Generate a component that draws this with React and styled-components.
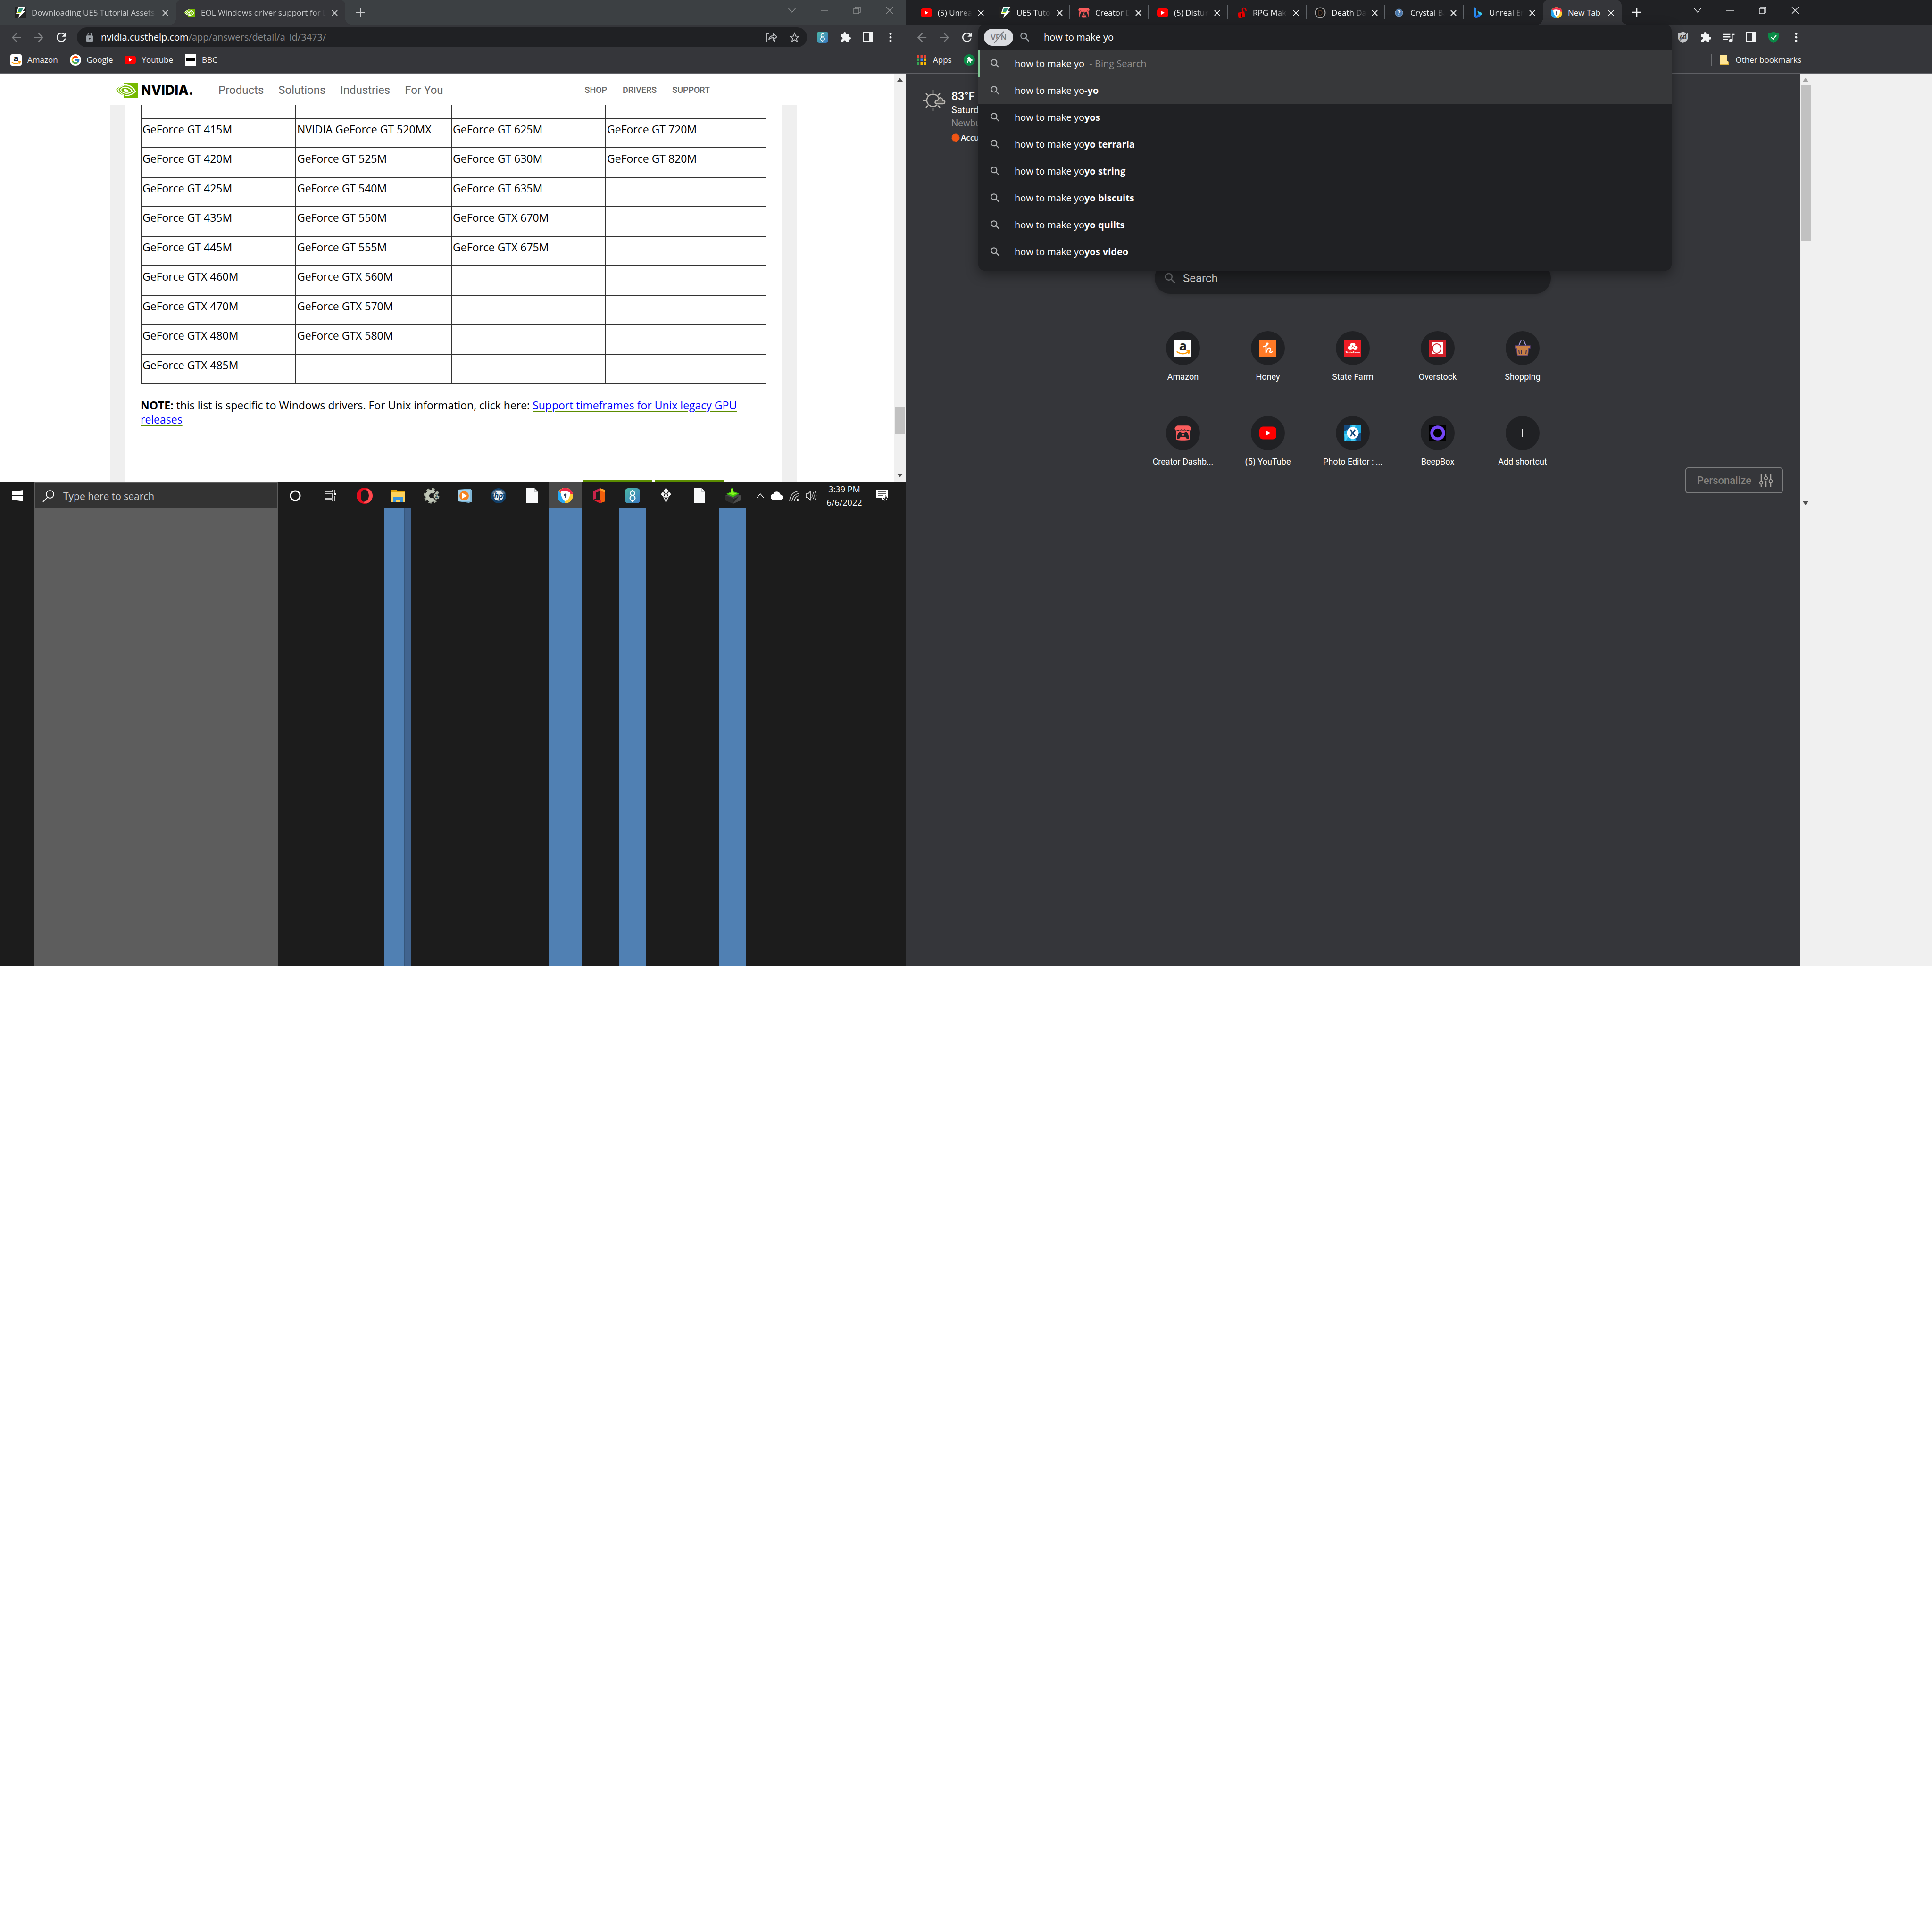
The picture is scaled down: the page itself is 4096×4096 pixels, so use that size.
import React from "react";
import styled, { createGlobalStyle, css } from "styled-components";
import { FcGoogle } from "react-icons/fc";
import { FaItchIo } from "react-icons/fa";
import {
  MdExtension,
  MdQueueMusic,
  MdLock,
  MdSearch,
  MdRefresh,
  MdStarBorder,
  MdArrowBack,
  MdArrowForward,
  MdMoreVert,
  MdCloud,
} from "react-icons/md";

const ui = `"Open Sans", "Noto Sans", sans-serif`;
const roboto = `Roboto, "Liberation Sans", sans-serif`;

const Global = createGlobalStyle`
  * { box-sizing: border-box; }
  body { margin: 0; background: #fff; font-family: ${ui}; }
  button { border: 0; padding: 0; background: none; font: inherit; color: inherit; }
  a { color: inherit; text-decoration: none; }
  input { border: 0; padding: 0; outline: 0; background: none; font: inherit; color: inherit; }
  svg { display: block; flex: none; }
`;

/* ---------- shell ---------- */

const Desktop = styled.main`
  display: grid;
  grid-template-columns: 15fr 17fr;
  min-height: 50vh;
`;

const Monitor = styled.section`
  display: flex;
  flex-direction: column;
  min-width: 0;
`;

const RightMonitor = styled(Monitor)`
  background: #35363a;
`;

const TabStrip = styled.header`
  display: flex;
  height: 52px;
  padding-left: ${(p) => (p.$dim ? 14 : 15)}px;
  padding-right: ${(p) => p.$bleed || 0}px;
  background: ${(p) => (p.$dim ? "#3c4043" : "#202124")};
  color: ${(p) => (p.$dim ? "#c9cbcd" : "#f1f3f4")};
`;

const TabBox = styled.div`
  position: relative;
  display: flex;
  align-items: center;
  gap: 12px;
  flex: 0 1 ${(p) => p.$width}px;
  min-width: 0;
  padding: 2px 16px 0 17px;
  ${(p) =>
    p.$active &&
    css`
      background: #35363a;
      border-radius: 12px 12px 0 0;
      &::before,
      &::after {
        content: "";
        position: absolute;
        bottom: 0;
        width: 12px;
        height: 12px;
      }
      &::before {
        right: 100%;
        background: radial-gradient(circle at 0 0, transparent 12px, #35363a 12px);
      }
      &::after {
        left: 100%;
        background: radial-gradient(circle at 100% 0, transparent 12px, #35363a 12px);
      }
    `}
  ${(p) =>
    p.$divided &&
    css`
      background: linear-gradient(#5f6368, #5f6368) right center / 2px 30px no-repeat;
    `}
`;

const TabTitle = styled.span`
  flex: 1;
  min-width: 0;
  overflow: hidden;
  white-space: nowrap;
  font-size: 17px;
  line-height: 24px;
  mask-image: ${(p) => (p.$whole ? "none" : "linear-gradient(to left, transparent, #000 28px)")};
`;

const TabClose = styled.button`
  display: flex;
`;

const NewTabButton = styled.button`
  display: flex;
  align-items: center;
  justify-content: center;
  width: 40px;
  margin-left: 12px;
`;

const WindowButtons = styled.div`
  display: flex;
  height: 44px;
  margin-left: auto;
  color: ${(p) => (p.$dim ? "#8f9193" : "#e8eaed")};
`;

const WindowButton = styled.button`
  display: flex;
  align-items: center;
  justify-content: center;
  width: 69px;
`;

const Toolbar = styled.div`
  display: flex;
  align-items: center;
  height: 54px;
  padding: 0 ${(p) => p.$right}px 0 10px;
  background: #35363a;
  color: #e8eaed;
`;

const ToolButton = styled.button`
  display: flex;
  align-items: center;
  justify-content: center;
  width: 48px;
  height: 42px;
  flex: none;
  color: ${(p) => p.$color || "#f1f3f4"};
`;

const AddressBar = styled.div`
  display: flex;
  align-items: center;
  flex: 1;
  min-width: 0;
  height: 42px;
  margin: 0 9px;
  padding: 0 3px 0 16px;
  border-radius: 21px;
  background: #202124;
  color: #9aa0a6;
`;

const Address = styled.div`
  flex: 1;
  margin-left: 13px;
  font-size: 20px;
  line-height: 28px;
  color: #86888a;
  b {
    font-weight: 400;
    color: #fff;
  }
`;

const Bookmarks = styled.nav`
  display: flex;
  align-items: center;
  gap: 25px;
  height: 50px;
  padding: 0 ${(p) => p.$right || 22}px 6px 22px;
  border-bottom: 2px solid #5f6065;
  background: #35363a;
  color: #f1f3f4;
`;

const BookmarkLink = styled.a`
  display: flex;
  align-items: center;
  gap: 12px;
  font-size: 17px;
  line-height: 24px;
`;

const OtherBookmarks = styled.div`
  display: flex;
  align-items: center;
  height: 24px;
  margin-left: auto;
  padding-left: 14px;
  border-left: 1px solid #6b6d70;
`;

/* ---------- support page ---------- */

const Viewport = styled.div`
  display: flex;
`;

const SupportPage = styled.div`
  flex: 1;
  min-width: 0;
  background: #fff;
`;

const SiteHeader = styled.header`
  display: flex;
  align-items: center;
  height: 66px;
  padding: 4px 391px 0 246px;
  color: #666;
  font-family: ${roboto};
`;

const Brand = styled.a`
  display: flex;
  align-items: center;
  gap: 7px;
  width: 166px;
  margin-right: 51px;
  color: #000;
  font: 800 28px/32px Inter, sans-serif;
`;

const MainLinks = styled.nav`
  display: flex;
  gap: 31px;
  font-size: 24px;
  line-height: 30px;
`;

const SideLinks = styled.nav`
  display: flex;
  gap: 33px;
  margin-left: auto;
  font-size: 18px;
  line-height: 24px;
  font-weight: 500;
`;

const Gutter = styled.div`
  padding: 0 207px 0 234px;
`;

const Article = styled.article`
  padding: 0 33px;
  border: solid #efefef;
  border-width: 0 31px;
  font-size: 23px;
  line-height: 30px;
  color: #000;
`;

const GpuTable = styled.table`
  width: 100%;
  table-layout: fixed;
  border-collapse: separate;
  border-spacing: 0;
  border-left: 2px solid #333;
`;

const GpuRow = styled.tr`
  height: ${(p) => p.$height}px;
`;

const GpuCell = styled.td`
  padding: ${(p) => (p.$cut ? 0 : 7)}px 2px 0;
  vertical-align: top;
  border: solid #333;
  border-width: 0 2px 2px 0;
`;

const Rule = styled.hr`
  height: 1px;
  margin: 15px 0 14px;
  border: 0;
  background: #999;
`;

const Note = styled.p`
  margin: 0;
  a {
    color: #00f;
    text-decoration: underline 2px #5b8c00;
    text-underline-offset: 3px;
  }
`;

const ActionTops = styled.div`
  display: flex;
  justify-content: flex-end;
  gap: 6px;
  margin-top: 114px;
  padding-right: 89px;
`;

const ActionTop = styled.div`
  width: 147px;
  height: 3px;
  background: #5b8c00;
`;

const Scrollbar = styled.div`
  display: flex;
  flex-direction: column;
  align-items: flex-start;
  width: ${(p) => p.$width}px;
  height: ${(p) => p.$height};
  padding: 9px 2px;
  background: #f0f0f0;
  color: ${(p) => p.$arrow};
`;

const Thumb = styled.div`
  width: 21px;
  height: ${(p) => p.$height}px;
  margin-top: ${(p) => p.$top}px;
  margin-bottom: auto;
  background: #c1c1c1;
`;

const Arrow = styled.div`
  width: 0;
  margin-left: 4px;
  border: 6px solid transparent;
  border-width: ${(p) => (p.$down ? "8px 6px 0" : "0 6px 8px")};
  border-top-color: ${(p) => (p.$down ? "#505050" : "transparent")};
  border-bottom-color: ${(p) => (p.$down ? "transparent" : "currentColor")};
`;

/* ---------- taskbar ---------- */

const Taskbar = styled.footer`
  display: flex;
  flex: 1;
  align-items: stretch;
  padding-right: 5px;
  background: #1c1c1c;
  color: #fff;
`;

const StartButton = styled.button`
  display: flex;
  align-items: flex-start;
  justify-content: center;
  flex: none;
  width: 73px;
  padding-top: 18px;
`;

const SearchPane = styled.div`
  flex: none;
  width: 516px;
  background: #5d5d5d;
`;

const TaskSearch = styled.label`
  display: flex;
  align-items: center;
  gap: 18px;
  height: 58px;
  padding: 3px 15px 0;
  border: 2px solid #5d5d5d;
  background: #333;
  color: #fff;
  input {
    flex: 1;
    min-width: 0;
    font-size: 21px;
    line-height: 30px;
  }
  input::placeholder {
    color: #d0d0d0;
    opacity: 1;
  }
`;

const TaskApp = styled.button`
  display: flex;
  flex: none;
  flex-direction: column;
  align-items: center;
  width: ${(p) => (p.$system ? 74 : 71)}px;
`;

const TaskIcon = styled.span`
  display: flex;
  align-items: center;
  justify-content: center;
  width: 69px;
  height: 57px;
  padding-top: 2px;
  background: ${(p) => (p.$active ? "#484848" : "transparent")};
`;

const Streak = styled.span`
  flex: 1;
  width: ${(p) => (p.$wide ? 69 : 57)}px;
  background: ${(p) =>
    p.$stacked
      ? "linear-gradient(to right, #5080b3 42px, #35577d 42px, #35577d 44px, #41648f 44px)"
      : "#5080b3"};
`;

const Tray = styled.div`
  display: flex;
  align-items: center;
  gap: 13px;
  height: 57px;
  padding-top: 2px;
  margin-left: auto;
  padding-right: 31px;
`;

const Clock = styled.time`
  margin: 0 17px 0 7px;
  width: 76px;
  text-align: center;
  font-size: 18px;
  line-height: 28px;
`;

const ShowDesktop = styled.div`
  width: 1px;
  background: #8a8a8a;
`;

/* ---------- new tab window ---------- */

const OmniSlot = styled.div`
  position: relative;
  z-index: 2;
  align-self: flex-start;
  flex: 1;
  min-width: 0;
  height: 54px;
`;

const OmniPopup = styled.div`
  position: absolute;
  inset: 0 0 auto 0;
  padding-bottom: 12px;
  border-radius: 14px;
  background: #202124;
  color: #fff;
  box-shadow: 0 8px 26px rgba(0, 0, 0, 0.4);
`;

const OmniField = styled.div`
  display: flex;
  align-items: center;
  height: 54px;
  padding-left: 12px;
  font-size: 20px;
  line-height: 28px;
  color: #9aa0a6;
  input {
    field-sizing: content;
    margin-left: 27px;
    color: #fff;
  }
`;

const VpnPill = styled.button`
  display: flex;
  align-items: center;
  justify-content: center;
  width: 62px;
  height: 36px;
  margin-right: 12px;
  border-radius: 18px;
  background: #dadce0;
`;

const Caret = styled.span`
  width: 1px;
  height: 28px;
  background: #fff;
`;

const Suggestions = styled.ul`
  margin: 0;
  padding: 0;
  list-style: none;
`;

const Suggestion = styled.li`
  display: flex;
  align-items: center;
  gap: 28px;
  height: 57px;
  padding-left: 19px;
  border-left: 4px solid ${(p) => (p.$selected ? "#81c995" : "transparent")};
  background: ${(p) => (p.$lit ? "#37383a" : "transparent")};
  font-size: 20px;
  line-height: 28px;
  svg {
    color: #b4b6b8;
  }
  i {
    font-style: normal;
    color: #8d8e90;
  }
`;

const NewTabArea = styled.div`
  display: flex;
  flex: 1;
`;

const NewTabPage = styled.div`
  position: relative;
  flex: 1;
  min-width: 0;
  height: 924px;
  padding-top: 33px;
  color: #fff;
  font-family: ${roboto};
`;

const Weather = styled.div`
  display: flex;
  gap: 12px;
  height: 367px;
  padding-left: 37px;
`;

const WeatherText = styled.div`
  display: flex;
  flex-direction: column;
  font-size: 20px;
  line-height: 28px;
  strong {
    font-size: 24px;
    line-height: 30px;
    font-weight: 500;
  }
  em {
    font-style: normal;
    color: #8d8e90;
  }
`;

const Accu = styled.span`
  display: flex;
  align-items: center;
  gap: 2px;
  margin-top: 5px;
  font: 600 17px/24px ${ui};
`;

const PageSearch = styled.label`
  display: flex;
  align-items: center;
  gap: 12px;
  max-width: 840px;
  height: 67px;
  margin: 0 auto 79px;
  padding: 0 18px;
  border-radius: 34px;
  background: #202124;
  box-shadow: 0 2px 8px rgba(0, 0, 0, 0.2);
  color: #6b6d70;
  font-size: 24px;
  input {
    flex: 1;
    min-width: 0;
  }
  input::placeholder {
    color: #d8d8d8;
    opacity: 1;
  }
`;

const Shortcuts = styled.nav`
  display: grid;
  grid-template-columns: repeat(5, 180px);
  grid-auto-rows: 180px;
  justify-content: center;
`;

const Shortcut = styled.a`
  display: flex;
  flex-direction: column;
  align-items: center;
  gap: 13px;
  font-size: 18px;
  line-height: 24px;
`;

const Disc = styled.span`
  display: flex;
  align-items: center;
  justify-content: center;
  width: 72px;
  height: 72px;
  border-radius: 50%;
  background: #202124;
`;

const Personalize = styled.button`
  position: absolute;
  right: 36px;
  bottom: 34px;
  display: flex;
  align-items: center;
  gap: 17px;
  height: 55px;
  padding: 0 20px 0 23px;
  border: 2px solid #7c7d7e;
  border-radius: 6px;
  color: #85827e;
  font-size: 22px;
  font-weight: 500;
`;

const ScrollSide = styled.aside`
  width: 280px;
  background: #f0f0f0;
`;

const GoogleDisc = styled.span`
  display: flex;
  align-items: center;
  justify-content: center;
  width: 24px;
  height: 24px;
  border-radius: 50%;
  background: #fff;
`;

/* ---------- drawings ---------- */

const Svg = ({ s = 24, w, h, box = "0 0 24 24", children }) => (
  <svg width={w || s} height={h || s} viewBox={box} fill="none" aria-hidden="true">
    {children}
  </svg>
);

const GoogleBadge = () => (
  <GoogleDisc>
    <FcGoogle size={20} />
  </GoogleDisc>
);
const CrossIcon = ({ s = 13, t = 2 }) => (
  <Svg s={s} box="0 0 14 14">
    <path d="M1 1L13 13M13 1L1 13" stroke="currentColor" strokeWidth={t} />
  </Svg>
);
const PlusIcon = ({ s = 20, t = 2 }) => (
  <Svg s={s} box="0 0 20 20">
    <path d="M10 1V19M1 10H19" stroke="currentColor" strokeWidth={t} />
  </Svg>
);
const ChevronIcon = ({ up }) => (
  <Svg w={18} h={12} box="0 0 18 12">
    <path d={up ? "M1 11L9 2L17 11" : "M1 1L9 10L17 1"} stroke="currentColor" strokeWidth="1.4" />
  </Svg>
);
const MinusIcon = () => (
  <Svg s={16} box="0 0 16 16">
    <path d="M0 8H16" stroke="currentColor" strokeWidth="1.4" />
  </Svg>
);
const RestoreIcon = () => (
  <Svg s={16} box="0 0 16 16">
    <path d="M1 4H12V15H1ZM4 4V1H15V12H12" stroke="currentColor" strokeWidth="1.4" />
  </Svg>
);
const PanelIcon = () => (
  <Svg s={24}>
    <path fillRule="evenodd" d="M1 1H23V23H1ZM4 4V20H14V4Z" fill="currentColor" />
  </Svg>
);
const ShareIcon = () => (
  <Svg s={24}>
    <path d="M6 5H2V22H19V17" stroke="currentColor" strokeWidth="2" />
    <path d="M6 17C7 11 10 9 15 9V4L23 11L15 18V13C11 13 8 14 6 17Z" stroke="currentColor" strokeWidth="2" />
  </Svg>
);
const EpicBoltIcon = () => (
  <Svg s={24}>
    <rect width="24" height="24" fill="#242424" />
    <path d="M8 0H23L17 9H22L7 24L11 14H3Z" fill="#fff" />
    <path d="M9 3H18L14 10H7Z" fill="#2c8f78" />
    <path d="M4 10H14L12 13H5Z" fill="#c6e313" />
  </Svg>
);
const NvidiaEye = ({ w = 46, h = 31 }) => (
  <Svg w={w} h={h} box="0 0 46 31">
    <path d="M17 0H46V31H17Z" fill="#76b900" />
    <path d="M0 14Q12 2 24 4Q36 7 42 17Q33 28 18 27Q6 24 0 14Z" fill="#76b900" />
    <path d="M17 4Q33 3 41 18Q31 28 18 26" stroke="#fff" strokeWidth="2.4" />
    <path d="M17 5Q7 8 4 14Q8 22 17 25" stroke="#fff" strokeWidth="2" />
    <path d="M17 9Q28 8 34 17Q27 24 17 21Q10 18 10 14Q12 10 17 9" stroke="#fff" strokeWidth="2.2" />
    <path d="M17 13Q23 12 27 17Q22 20 17 17Z" fill="#fff" />
  </Svg>
);
const YoutubeIcon = ({ s = 24 }) => (
  <Svg s={s}>
    <rect y="3" width="24" height="18" rx="5" fill="#f00" />
    <path d="M9 8L16 12L9 16Z" fill="#fff" />
  </Svg>
);
const AmazonIcon = ({ s = 24, r = 4 }) => (
  <Svg s={s}>
    <rect width="24" height="24" rx={r} fill="#fff" />
    <text x="12" y="15" textAnchor="middle" fontFamily="Open Sans" fontWeight="700" fontSize="18" fill="#222">a</text>
    <path d="M3 17Q12 23 20 17M17 16L21 16L20 20" stroke="#f90" strokeWidth="1.8" />
  </Svg>
);
const BbcIcon = () => (
  <Svg s={24}>
    <rect width="24" height="24" fill="#fff" />
    <path d="M2 9H8V15H2ZM9 9H15V15H9ZM16 9H22V15H16Z" fill="#000" />
  </Svg>
);
const EightIcon = ({ s = 24 }) => (
  <Svg s={s}>
    <defs>
      <linearGradient id={`eight${s}`} x1="0" y1="0" x2="1" y2="1">
        <stop offset="0" stopColor="#4bb8a5" />
        <stop offset="1" stopColor="#3a78c2" />
      </linearGradient>
    </defs>
    <rect width="24" height="24" rx="5" fill={`url(#eight${s})`} />
    <circle cx="12" cy="8" r="3.4" stroke="#fff" strokeWidth="1.7" />
    <circle cx="12" cy="15.6" r="4.1" stroke="#fff" strokeWidth="1.7" />
    <path d="M12 2.5V4.5M12 20V22" stroke="#fff" strokeWidth="1.7" />
  </Svg>
);
const AppsIcon = () => (
  <Svg s={24}>
    {["#ea4335", "#ea4335", "#ea4335", "#34a853", "#4285f4", "#fbbc04", "#34a853", "#fbbc04", "#fbbc04"].map((c, i) => (
      <rect key={i} x={2 + (i % 3) * 7.5} y={2 + Math.floor(i / 3) * 7.5} width="5" height="5" fill={c} />
    ))}
  </Svg>
);
const PuzzleDisc = () => (
  <Svg s={24}>
    <circle cx="12" cy="12" r="12" fill="#0b8a47" />
    <path d="M7 8H10Q9 5 11.500 5Q14 5 13 8H16V11Q19 10 19 12.500Q19 15 16 14V18H13Q13 15 11 15Q9 15 9 18H7V14Q9 14 9 12Q9 11 7 11Z" fill="#fff" />
  </Svg>
);
const PadlockIcon = () => (
  <Svg s={24}>
    <path d="M4 12L18 9L20 21L6 24Z" fill="#e60000" />
    <path d="M15 10Q12 2 17 2Q21 2 22 9" stroke="#e60000" strokeWidth="2.4" />
    <circle cx="12" cy="15" r="1.800" fill="#300" />
    <path d="M12 16L12.600 20" stroke="#300" strokeWidth="1.500" />
  </Svg>
);
const DeathIcon = () => (
  <Svg s={24}>
    <circle cx="12" cy="12" r="10.500" fill="#141414" stroke="#a8a8a8" strokeWidth="2" />
    <path d="M9 7H12Q16 8 16 12Q16 16 12 17H9Z" stroke="#5c3c2b" strokeWidth="1.500" />
  </Svg>
);
const HelpBallIcon = () => (
  <Svg s={24}>
    <circle cx="12" cy="12" r="8" fill="#4a76a8" stroke="#87a5c5" />
    <text x="12" y="17" textAnchor="middle" fontFamily="Open Sans" fontWeight="700" fontSize="14" fill="#fff">?</text>
  </Svg>
);
const BingIcon = () => (
  <Svg s={24}>
    <path d="M4 0L9 2V18L4 21Z" fill="#2b8df0" />
    <path d="M4 21L9 18L19 12V18L9 24Z" fill="#1f6fe0" />
    <path d="M11 8L20 12V17L14 15Z" fill="#38c6e8" />
  </Svg>
);
const AvastIcon = ({ s = 24 }) => (
  <Svg s={s}>
    <circle cx="12" cy="12" r="12" fill="#fc3" />
    <path d="M2 6A12 12 0 0 1 24 10L12 8Z" fill="#ee2a4b" />
    <path d="M12 24A12 12 0 0 1 2 5L9 14Z" fill="#25a9f5" />
    <path d="M5 6Q12 4 19 7Q20 17 12 21Q5 17 5 6Z" fill="#fff" />
    <circle cx="12" cy="11" r="2" fill="#35405f" />
    <path d="M12 12V16" stroke="#35405f" strokeWidth="1.800" />
  </Svg>
);
const VpnIcon = () => (
  <Svg w={38} h={26} box="0 0 38 26">
    <text x="19" y="19" textAnchor="middle" fontFamily="Roboto" fontSize="17" fontWeight="500" fill="#77797d">VPN</text>
    <path d="M12 23L28 3" stroke="#dadce0" strokeWidth="4" />
    <path d="M10 25L30 1" stroke="#77797d" strokeWidth="2" />
  </Svg>
);
const ShieldIcon = ({ ad }) => (
  <Svg s={24}>
    <path d="M12 0Q17 3 23 2V12Q22 20 12 24Q2 20 1 12V2Q7 3 12 0Z" fill={ad ? "#c4c6c9" : "#0b8a47"} />
    {ad ? (
      <>
        <text x="12" y="16" textAnchor="middle" fontFamily="Roboto" fontWeight="700" fontSize="12" fill="#35363a">AB</text>
        <path d="M5 19L20 4" stroke="#35363a" strokeWidth="1.500" />
      </>
    ) : (
      <path d="M7 12L11 16L18 8" stroke="#fff" strokeWidth="2" />
    )}
  </Svg>
);
const BookmarkFolder = () => (
  <Svg s={24}>
    <path d="M3 1H19V14L22 16V22H3Z" fill="#e0b43c" />
    <path d="M4 2H18V21H4Z" fill="#ffe594" />
    <path d="M18 15H21V21H18Z" fill="#ffe594" />
  </Svg>
);
const SunIcon = () => (
  <Svg s={48} box="0 0 48 48">
    <path d="M30 33A13 13 0 1 1 33 19" stroke="#b9b6b1" strokeWidth="2.500" />
    <path d="M21 2V8M21 40V46M0 24H6M6 9L10 13M36 9L32 13M6 39L10 35M36 39L32 35" stroke="#b9b6b1" strokeWidth="2.500" />
    <path d="M29 31Q24 30 26 26Q28 22 31 24Q34 16 39 19Q42 21 42 24Q47 25 46 28Q45 31 42 31Z" fill="#555452" stroke="#b9b6b1" strokeWidth="2.500" />
  </Svg>
);
const SunSpot = () => (
  <Svg s={18} box="0 0 18 18">
    <circle cx="9" cy="9" r="7.500" fill="#f05514" stroke="#f05514" strokeWidth="2" strokeDasharray="2 1" />
  </Svg>
);
const WindowsIcon = () => (
  <Svg s={24}>
    <path d="M0 3L10 2V11H0ZM11 2L24 0V11H11ZM0 12H10V22L0 21ZM11 12H24V24L11 22Z" fill="#fff" />
  </Svg>
);
const LoupeIcon = () => (
  <Svg s={26} box="0 0 26 26">
    <circle cx="16" cy="9" r="8" stroke="#fff" strokeWidth="1.800" />
    <path d="M11 15L1 25" stroke="#fff" strokeWidth="1.800" />
  </Svg>
);
const CortanaIcon = () => (
  <Svg s={24}>
    <circle cx="12" cy="12" r="10" stroke="#fff" strokeWidth="3" />
  </Svg>
);
const TaskViewIcon = () => (
  <Svg s={24}>
    <path d="M1 0V4H16V0M1 24V20H16V24M1 7H16V17H1ZM22 0V6M22 12V24" stroke="#fff" strokeWidth="1.500" />
    <path d="M20 7H24V10H20Z" fill="#fff" />
  </Svg>
);
const OperaIcon = () => (
  <Svg s={34} box="0 0 34 34">
    <path fillRule="evenodd" d="M17 0A17 17 0 1 1 17 34A17 17 0 1 1 17 0ZM17 4C12 4 9 9 9 17S12 30 17 30S26 25 26 17S22 4 17 4Z" fill="#e30d1e" />
    <path d="M24 2Q34 7 34 17Q34 28 23 33Q16 34 15 30Q26 28 26 17Q26 8 20 4Z" fill="#ff4a4f" />
  </Svg>
);
const ExplorerIcon = () => (
  <Svg s={32} box="0 0 32 32">
    <path d="M0 3H13L15 6H31V29H0Z" fill="#e5a50a" />
    <path d="M0 8H31V29H0Z" fill="#ffd35c" />
    <path d="M5 30V18H26V30H20V24H11V30Z" fill="#3a94dc" />
  </Svg>
);
const GearIcon = () => (
  <Svg s={34} box="0 0 34 34">
    <circle cx="17" cy="17" r="14" stroke="#a9b0a1" strokeWidth="5" strokeDasharray="6 5" />
    <circle cx="17" cy="17" r="9" stroke="#bfc5b6" strokeWidth="8" />
    <path d="M20 15L28 6M20 19L28 29" stroke="#1c1c1c" strokeWidth="2" />
    <text x="27" y="21" textAnchor="middle" fontFamily="Open Sans" fontWeight="700" fontSize="11" fill="#2f4a46">2</text>
  </Svg>
);
const MediaIcon = () => (
  <Svg s={30} box="0 0 30 30">
    <path d="M1 2L26 0L29 3V28L23 30L1 27Z" fill="#7fb6d6" />
    <path d="M1 2H25V27H1Z" fill="#a3d0ea" />
    <circle cx="13" cy="15" r="10" fill="#f58220" />
    <path d="M9 9L19 15L9 21Z" fill="#fff" />
  </Svg>
);
const HpIcon = () => (
  <Svg s={32} box="0 0 32 32">
    <circle cx="16" cy="16" r="16" fill="#123f68" />
    <path d="M2 11A16 16 0 0 1 30 11Q16 19 2 11Z" fill="#5a7389" />
    <circle cx="16" cy="16" r="10.500" fill="#e6ebf0" />
    <text x="16" y="21" textAnchor="middle" fontFamily="Open Sans" fontStyle="italic" fontWeight="700" fontSize="16" fill="#123f68">hp</text>
  </Svg>
);
const FileIcon = () => (
  <Svg w={24} h={32} box="0 0 24 32">
    <path d="M0 0H17L24 7V32H0Z" fill="#f8f9fa" />
    <path d="M17 0V7H24" stroke="#a9adb0" strokeWidth="1.500" />
  </Svg>
);
const OfficeIcon = () => (
  <Svg s={32} box="0 0 32 32">
    <path d="M18 0L4 6V24L10 22V9L19 6Z" fill="#c8234a" />
    <path d="M18 0L29 4V28L18 32Z" fill="#f2600c" />
    <path d="M4 25L18 32L21 31V26Z" fill="#e01f2d" />
    <path d="M18 0L29 4V9L20 6Z" fill="#ffa028" />
  </Svg>
);
const DragonIcon = () => (
  <Svg w={22} h={34} box="0 0 22 34">
    <path d="M11 0L15 5L18 14L16 22L13 27L11 34L9 27L6 22L4 14L7 5Z" fill="#f5f5f5" />
    <path d="M0 14L5 8L4 18ZM22 14L17 8L18 18Z" fill="#f5f5f5" />
    <path d="M11 4V14M7 9L9 13L7 17M15 9L13 13L15 17M8 20L11 25L14 20M11 26V31" stroke="#111" strokeWidth="1.700" />
  </Svg>
);
const CubeIcon = () => (
  <Svg s={34} box="0 0 34 34">
    <path d="M1 16L17 10L33 16V27L17 34L1 27Z" fill="#2f3030" />
    <path d="M1 16L17 22L33 16L17 10Z" fill="#454646" />
    <path d="M17 22L33 16V27L17 34Z" fill="#4b4c4c" />
    <path d="M17 24L30 18L17 33Z" fill="#262626" />
    <path d="M12 2L17 0L18 8L30 12L17 20L3 13L12 9Z" fill="#3fc30e" />
    <path d="M13 3L16 2L17 10L25 12L17 16L8 12L13 11Z" fill="#8af41e" />
  </Svg>
);
const WifiIcon = () => (
  <Svg s={22} box="0 0 22 22">
    <path d="M1 22Q3 4 20 1M6 22Q8 9 20 6M11 22Q12 13 20 11" stroke="#d5d5d5" strokeWidth="1.500" />
    <circle cx="18" cy="20" r="2.300" fill="#fff" />
  </Svg>
);
const SpeakerIcon = () => (
  <Svg s={24}>
    <path d="M1 8H5L10 3V21L5 16H1Z" stroke="#fff" strokeWidth="1.500" />
    <path d="M13 8Q15 12 13 16M16 5Q20 12 16 19M20 3Q25 12 20 21" stroke="#d5d5d5" strokeWidth="1.500" />
  </Svg>
);
const NoticeIcon = () => (
  <Svg s={25} box="0 0 25 25">
    <path d="M0 0H24V18H15L11 23V18H0Z" fill="#fff" />
    <path d="M4 5H20M4 9H20M4 13H14" stroke="#222" strokeWidth="1.500" />
    <path d="M19 11Q24 15 22 20Q18 25 13 21Q20 21 19 11Z" fill="#1c1c1c" stroke="#fff" />
  </Svg>
);
const HoneyIcon = () => (
  <Svg s={36} box="0 0 36 36">
    <rect width="36" height="36" fill="#ff7a26" />
    <path d="M9 15Q20 11 18 8Q14 6 14 17V28Q18 16 22 18Q25 20 22 26Q23 29 27 26" stroke="#fff" strokeWidth="2.600" strokeLinecap="round" />
  </Svg>
);
const StateFarmIcon = () => (
  <Svg s={36} box="0 0 36 36">
    <rect width="36" height="36" fill="#ee1c25" />
    <ellipse cx="18" cy="11" rx="5.500" ry="4" fill="#fff" />
    <ellipse cx="13" cy="17" rx="5.500" ry="4" fill="#fff" />
    <ellipse cx="23" cy="17" rx="5.500" ry="4" fill="#fff" />
    <path d="M18 11V14M18 14L14 17M18 14L22 17" stroke="#ee1c25" />
    <text x="18" y="29" textAnchor="middle" fontFamily="Open Sans" fontWeight="700" fontSize="6" fill="#fff">StateFarm</text>
  </Svg>
);
const OverstockIcon = () => (
  <Svg s={36} box="0 0 36 36">
    <rect width="36" height="36" fill="#cf2029" />
    <rect x="6" y="6" width="24" height="24" fill="#fff" />
    <ellipse cx="16" cy="19" rx="9" ry="10" fill="#fff" stroke="#cf2029" strokeWidth="2" />
  </Svg>
);
const BasketIcon = () => (
  <Svg s={36} box="0 0 36 36">
    <path d="M9 15L15 1M26 15L20 1" stroke="#a69ad8" strokeWidth="2" />
    <path d="M2 13H34V18H31L29 34H7L5 18H2Z" fill="#c98045" stroke="#5b3f78" strokeWidth="1.500" />
    <path d="M10 21L11 31M15 21V31M21 21V31M26 21L25 31" stroke="#35284f" strokeWidth="2" />
  </Svg>
);
const PixlrIcon = () => (
  <Svg s={36} box="0 0 36 36">
    <rect width="36" height="36" fill="#18a8df" />
    <path d="M0 0H14L10 10L0 14ZM36 16V36H26L24 26Z" fill="#144a7d" />
    <path d="M14 0H24L22 12ZM14 36L16 24L24 36ZM0 20L12 20L2 36Z" fill="#4cd0f5" />
    <circle cx="18" cy="18" r="12.500" fill="#fff" />
    <path d="M13 11L23 25M23 11L13 25" stroke="#144a7d" strokeWidth="3" />
  </Svg>
);
const BeepBoxIcon = () => (
  <Svg s={36} box="0 0 36 36">
    <rect width="36" height="36" fill="#000" />
    <circle cx="18" cy="18" r="12.500" stroke="#7446f5" strokeWidth="6.500" />
  </Svg>
);
const SlidersIcon = () => (
  <Svg s={28} box="0 0 28 28">
    <path d="M4 0V14M4 23V28M14 0V4M14 14V28M24 0V10M24 20V28" stroke="#aaa7a3" strokeWidth="2.500" />
    <circle cx="4" cy="18.500" r="3.300" stroke="#aaa7a3" strokeWidth="2" />
    <circle cx="14" cy="9" r="3.300" stroke="#aaa7a3" strokeWidth="2" />
    <circle cx="24" cy="15" r="3.300" stroke="#aaa7a3" strokeWidth="2" />
  </Svg>
);

/* ---------- data ---------- */

const gpuRows = [
  ["GeForce GT 415M", "NVIDIA GeForce GT 520MX", "GeForce GT 625M", "GeForce GT 720M"],
  ["GeForce GT 420M", "GeForce GT 525M", "GeForce GT 630M", "GeForce GT 820M"],
  ["GeForce GT 425M", "GeForce GT 540M", "GeForce GT 635M", ""],
  ["GeForce GT 435M", "GeForce GT 550M", "GeForce GTX 670M", ""],
  ["GeForce GT 445M", "GeForce GT 555M", "GeForce GTX 675M", ""],
  ["GeForce GTX 460M", "GeForce GTX 560M", "", ""],
  ["GeForce GTX 470M", "GeForce GTX 570M", "", ""],
  ["GeForce GTX 480M", "GeForce GTX 580M", "", ""],
  ["GeForce GTX 485M", "", "", ""],
];

const suggestions = ["-yo", "yos", "yo terraria", "yo string", "yo biscuits", "yo quilts", "yos video"];

const rightTabs = [
  ["(5) Unrea", <YoutubeIcon />],
  ["UE5 Tuto", <EpicBoltIcon />],
  ["Creator D", <FaItchIo size={24} color="#fa5c5c" />],
  ["(5) Distur", <YoutubeIcon />],
  ["RPG Mak", <PadlockIcon />],
  ["Death Da", <DeathIcon />],
  ["Crystal Ba", <HelpBallIcon />],
  ["Unreal En", <BingIcon />],
  ["New Tab", <AvastIcon />],
];

const taskApps = [
  { name: "Cortana", icon: <CortanaIcon />, system: true },
  { name: "Task view", icon: <TaskViewIcon />, system: true },
  { name: "Opera", icon: <OperaIcon /> },
  { name: "File Explorer", icon: <ExplorerIcon />, open: true, stacked: true },
  { name: "Settings", icon: <GearIcon /> },
  { name: "Media player", icon: <MediaIcon /> },
  { name: "HP", icon: <HpIcon /> },
  { name: "Document", icon: <FileIcon /> },
  { name: "Browser", icon: <AvastIcon s={33} />, open: true, active: true },
  { name: "Office", icon: <OfficeIcon /> },
  { name: "Eight", icon: <EightIcon s={32} />, open: true },
  { name: "Game", icon: <DragonIcon /> },
  { name: "Notes", icon: <FileIcon /> },
  { name: "Installer", icon: <CubeIcon />, open: true },
];

const shortcuts = [
  ["Amazon", <AmazonIcon s={36} r={0} />],
  ["Honey", <HoneyIcon />],
  ["State Farm", <StateFarmIcon />],
  ["Overstock", <OverstockIcon />],
  ["Shopping", <BasketIcon />],
  ["Creator Dashb...", <FaItchIo size={36} color="#fa5c5c" />],
  ["(5) YouTube", <YoutubeIcon s={36} />],
  ["Photo Editor : ...", <PixlrIcon />],
  ["BeepBox", <BeepBoxIcon />],
  ["Add shortcut", <PlusIcon s={18} />],
];

/* ---------- parts ---------- */

const Tab = ({ title, icon, width, active, divided, whole }) => (
  <TabBox $width={width} $active={active} $divided={divided}>
    {icon}
    <TabTitle $whole={whole}>{title}</TabTitle>
    <TabClose aria-label="Close tab">
      <CrossIcon />
    </TabClose>
  </TabBox>
);

const Controls = ({ dim }) => (
  <WindowButtons $dim={dim}>
    <WindowButton aria-label="Search tabs"><ChevronIcon /></WindowButton>
    <WindowButton aria-label="Minimize"><MinusIcon /></WindowButton>
    <WindowButton aria-label="Restore"><RestoreIcon /></WindowButton>
    <WindowButton aria-label="Close"><CrossIcon s={16} t={1.3} /></WindowButton>
  </WindowButtons>
);

const NavButtons = () => (
  <>
    <ToolButton aria-label="Back" $color="#7f8184"><MdArrowBack size={29} /></ToolButton>
    <ToolButton aria-label="Forward" $color="#7f8184"><MdArrowForward size={29} /></ToolButton>
    <ToolButton aria-label="Reload"><MdRefresh size={30} /></ToolButton>
  </>
);

const Bookmark = ({ icon, children }) => (
  <BookmarkLink href="#">
    {icon}
    {children}
  </BookmarkLink>
);

function SupportWindow() {
  return (
    <>
      <TabStrip $dim>
        <Tab width={359} title="Downloading UE5 Tutorial Assets" icon={<EpicBoltIcon />} />
        <Tab width={359} title="EOL Windows driver support for L" icon={<NvidiaEye w={24} h={16} />} active />
        <NewTabButton aria-label="New tab"><PlusIcon /></NewTabButton>
        <Controls dim />
      </TabStrip>
      <Toolbar $right={8}>
        <NavButtons />
        <AddressBar>
          <MdLock size={22} />
          <Address role="textbox" aria-label="Address">
            <b>nvidia.custhelp.com</b>/app/answers/detail/a_id/3473/
          </Address>
          <ToolButton aria-label="Share" $color="#b8babd"><ShareIcon /></ToolButton>
          <ToolButton aria-label="Bookmark" $color="#c4c6c9"><MdStarBorder size={27} /></ToolButton>
        </AddressBar>
        <ToolButton aria-label="Eight"><EightIcon /></ToolButton>
        <ToolButton aria-label="Extensions"><MdExtension size={25} /></ToolButton>
        <ToolButton aria-label="Side panel"><PanelIcon /></ToolButton>
        <ToolButton aria-label="Menu"><MdMoreVert size={30} /></ToolButton>
      </Toolbar>
      <Bookmarks>
        <Bookmark icon={<AmazonIcon />}>Amazon</Bookmark>
        <Bookmark icon={<GoogleBadge />}>Google</Bookmark>
        <Bookmark icon={<YoutubeIcon />}>Youtube</Bookmark>
        <Bookmark icon={<BbcIcon />}>BBC</Bookmark>
      </Bookmarks>
      <Viewport>
        <SupportPage>
          <SiteHeader>
            <Brand href="#" aria-label="NVIDIA">
              <NvidiaEye />
              NVIDIA.
            </Brand>
            <MainLinks>
              <a href="#">Products</a>
              <a href="#">Solutions</a>
              <a href="#">Industries</a>
              <a href="#">For You</a>
            </MainLinks>
            <SideLinks>
              <a href="#">SHOP</a>
              <a href="#">DRIVERS</a>
              <a href="#">SUPPORT</a>
            </SideLinks>
          </SiteHeader>
          <Gutter>
            <Article>
              <GpuTable>
                <colgroup>
                  <col width="328" />
                  <col width="330" />
                  <col width="327" />
                  <col />
                </colgroup>
                <tbody>
                  <GpuRow $height={30}>
                    {[0, 1, 2, 3].map((c) => (
                      <GpuCell key={c} $cut />
                    ))}
                  </GpuRow>
                  {gpuRows.map((row, r) => (
                    <GpuRow key={r} $height={r % 2 ? 63 : 62}>
                      {row.map((name, c) => (
                        <GpuCell key={c}>{name}</GpuCell>
                      ))}
                    </GpuRow>
                  ))}
                </tbody>
              </GpuTable>
              <Rule />
              <Note>
                <strong>NOTE:</strong> this list is specific to Windows drivers. For Unix information, click here:{" "}
                <a href="#">Support timeframes for Unix legacy GPU releases</a>
              </Note>
              <ActionTops>
                <ActionTop />
                <ActionTop />
              </ActionTops>
            </Article>
          </Gutter>
        </SupportPage>
        <Scrollbar $width={24} $height="auto" $arrow="#505050">
          <Arrow />
          <Thumb $height={59} $top={689} />
          <Arrow $down />
        </Scrollbar>
      </Viewport>
      <Taskbar>
        <StartButton aria-label="Start"><WindowsIcon /></StartButton>
        <SearchPane>
          <TaskSearch>
            <LoupeIcon />
            <input aria-label="Type here to search" placeholder="Type here to search" />
          </TaskSearch>
        </SearchPane>
        {taskApps.map((app) => (
          <TaskApp key={app.name} aria-label={app.name} $system={app.system}>
            <TaskIcon $active={app.active}>{app.icon}</TaskIcon>
            {app.open && <Streak $wide={app.active} $stacked={app.stacked} />}
          </TaskApp>
        ))}
        <Tray>
          <ChevronIcon up />
          <MdCloud size={26} />
          <WifiIcon />
          <SpeakerIcon />
          <Clock>3:39 PM 6/6/2022</Clock>
          <NoticeIcon />
        </Tray>
        <ShowDesktop />
      </Taskbar>
    </>
  );
}

function NewTabWindow() {
  return (
    <>
      <TabStrip $bleed={256}>
        {rightTabs.map(([title, icon], i) => (
          <Tab
            key={title}
            width={167}
            title={title}
            icon={icon}
            active={i === 8}
            whole={i === 8}
            divided={i < 7}
          />
        ))}
        <NewTabButton aria-label="New tab"><PlusIcon t={2.6} /></NewTabButton>
        <Controls />
      </TabStrip>
      <Toolbar $right={264}>
        <NavButtons />
        <OmniSlot>
          <OmniPopup>
            <OmniField>
              <VpnPill aria-label="VPN"><VpnIcon /></VpnPill>
              <MdSearch size={26} />
              <input aria-label="Search or type a URL" defaultValue="how to make yo" />
              <Caret />
            </OmniField>
            <Suggestions>
              <Suggestion $selected $lit>
                <MdSearch size={26} />
                <span>how to make yo <i>&nbsp;- Bing Search</i></span>
              </Suggestion>
              {suggestions.map((tail, i) => (
                <Suggestion key={tail} $lit={i === 0}>
                  <MdSearch size={26} />
                  <span>how to make yo<b>{tail}</b></span>
                </Suggestion>
              ))}
            </Suggestions>
          </OmniPopup>
        </OmniSlot>
        <ToolButton aria-label="Ad blocker"><ShieldIcon ad /></ToolButton>
        <ToolButton aria-label="Extensions"><MdExtension size={25} /></ToolButton>
        <ToolButton aria-label="Media"><MdQueueMusic size={31} /></ToolButton>
        <ToolButton aria-label="Side panel"><PanelIcon /></ToolButton>
        <ToolButton aria-label="Security"><ShieldIcon /></ToolButton>
        <ToolButton aria-label="Menu"><MdMoreVert size={30} /></ToolButton>
      </Toolbar>
      <Bookmarks $right={277}>
        <Bookmark icon={<AppsIcon />}>Apps</Bookmark>
        <Bookmark icon={<PuzzleDisc />} />
        <OtherBookmarks>
          <Bookmark icon={<BookmarkFolder />}>Other bookmarks</Bookmark>
        </OtherBookmarks>
      </Bookmarks>
      <NewTabArea>
        <NewTabPage>
          <Weather>
            <SunIcon />
            <WeatherText>
              <strong>83°F</strong>
              <span>Saturd</span>
              <em>Newbu</em>
              <Accu><SunSpot />Accu</Accu>
            </WeatherText>
          </Weather>
          <PageSearch>
            <MdSearch size={30} />
            <input aria-label="Search" placeholder="Search" />
          </PageSearch>
          <Shortcuts>
            {shortcuts.map(([label, icon]) => (
              <Shortcut key={label} href="#">
                <Disc>{icon}</Disc>
                {label}
              </Shortcut>
            ))}
          </Shortcuts>
          <Personalize>
            Personalize
            <SlidersIcon />
          </Personalize>
        </NewTabPage>
        <ScrollSide>
          <Scrollbar $width={24} $height="924px" $arrow="#a3a3a3">
            <Arrow />
            <Thumb $height={329} $top={8} />
            <Arrow $down />
          </Scrollbar>
        </ScrollSide>
      </NewTabArea>
    </>
  );
}

export default function App() {
  return (
    <>
      <Global />
      <Desktop>
        <Monitor>
          <SupportWindow />
        </Monitor>
        <RightMonitor>
          <NewTabWindow />
        </RightMonitor>
      </Desktop>
    </>
  );
}
